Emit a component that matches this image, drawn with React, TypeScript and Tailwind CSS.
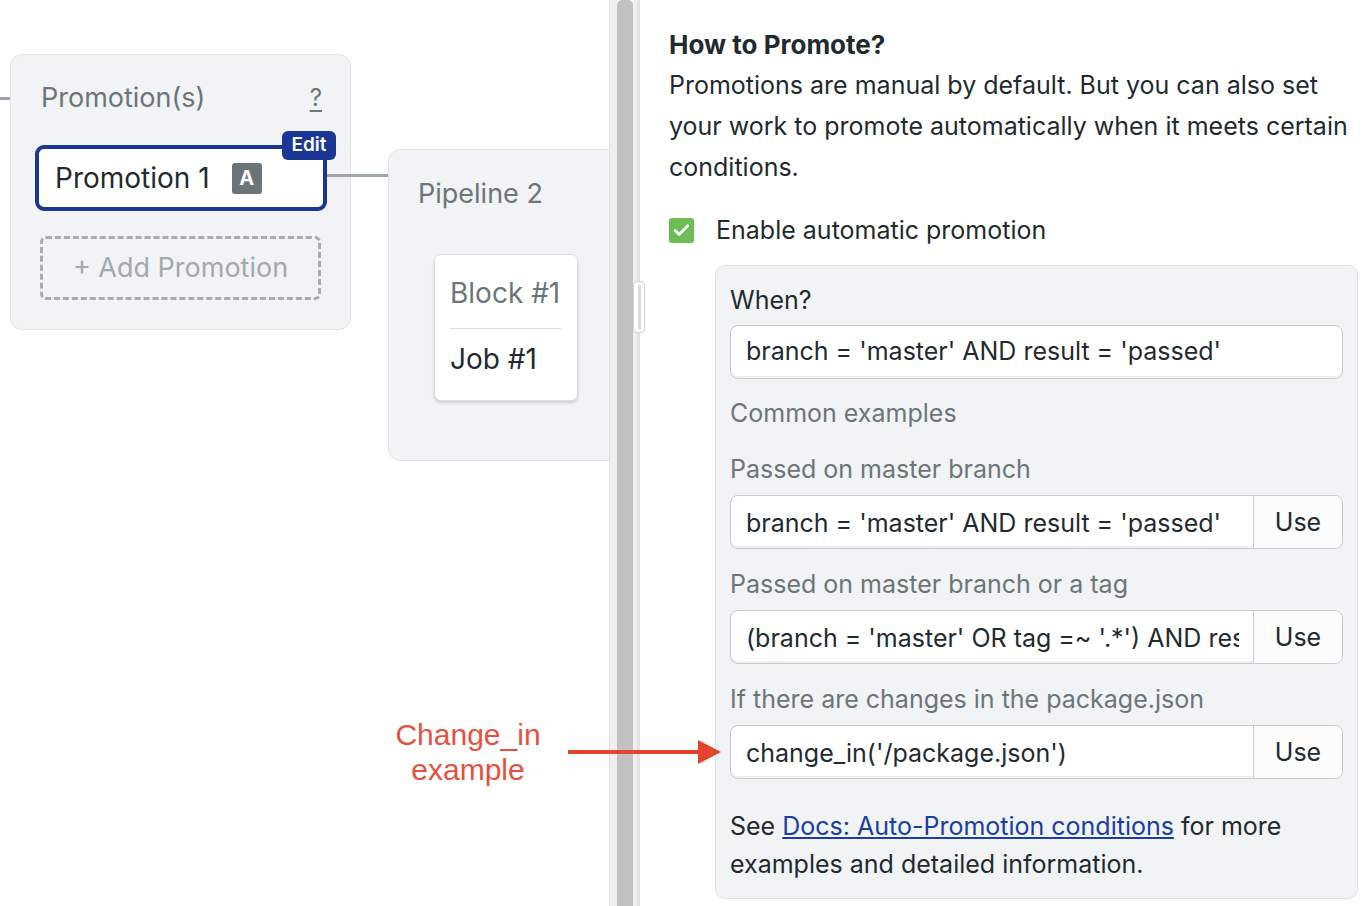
import { Check } from "lucide-react";

const UI = "font-['Inter',_'Liberation_Sans',_sans-serif]";

const examples = [
  { label: "Passed on master branch", value: "branch = 'master' AND result = 'passed'" },
  {
    label: "Passed on master branch or a tag",
    value: "(branch = 'master' OR tag =~ '.*') AND result = 'passed'",
  },
  { label: "If there are changes in the package.json", value: "change_in('/package.json')" },
];

function Diagram() {
  return (
    <div className="relative h-full w-[609px] shrink-0 overflow-hidden bg-white">
      {/* edge coming in from the left */}
      <div className="absolute left-0 top-[97px] h-[3px] w-[11px] bg-[#9ca6a9]" />

      <div className="absolute left-[10px] top-[54px] h-[276px] w-[341px] rounded-[12px] border border-[#e1e5e7] bg-[#f1f3f4]">
        <div className="flex items-center justify-between pl-[30px] pr-[28px] pt-[24px]">
          <span className="text-[27px] leading-[38px] text-[#6b7679]">Promotion(s)</span>
          <span className="text-[24px] leading-[38px] text-[#6b7679] underline underline-offset-4">?</span>
        </div>

        <div className="relative ml-[24px] mt-[28px] flex h-[66px] w-[292px] items-center rounded-[9px] border-4 border-[#1a3794] bg-white pl-[16px]">
          <span className="text-[28px] text-[#1f2b2f]">Promotion 1</span>
          <span className="ml-[22px] flex h-[31px] w-[30px] items-center justify-center rounded-[3px] bg-[#6b7476] text-[20px] font-bold text-white">
            A
          </span>
          <span className="absolute -right-[13px] -top-[18px] flex h-[29px] w-[54px] items-center justify-center rounded-[6px] bg-[#1a3794] text-[19px] font-semibold text-white">
            Edit
          </span>
        </div>

        <div className="ml-[29px] mt-[25px] flex h-[64px] w-[281px] items-center justify-center rounded-[6px] border-[3px] border-dashed border-[#a5adb0] text-[27px] text-[#a2aaad]">
          + Add Promotion
        </div>
      </div>

      <div className="absolute left-[327px] top-[174px] h-[3px] w-[62px] bg-[#9ca6a9]" />

      <div className="absolute left-[388px] top-[149px] h-[312px] w-[260px] rounded-[12px] border border-[#e1e5e7] bg-[#f1f3f4]">
        <div className="pl-[29px] pt-[25px] text-[27px] leading-[38px] text-[#6b7679]">Pipeline 2</div>
        <div className="ml-[45px] mt-[41px] w-[144px] rounded-[7px] border border-[#dadfe1] bg-white px-[15px] pb-[22px] pt-[19px] shadow-[0_2px_3px_rgba(0,0,0,0.15)]">
          <div className="text-[28px] leading-[38px] text-[#6b7679]">Block #1</div>
          <div className="mt-[16px] h-px bg-[#dadfe1]" />
          <div className="mt-[11px] text-[28px] leading-[38px] text-[#1f2b2f]">Job #1</div>
        </div>
      </div>
    </div>
  );
}

function Divider() {
  return (
    <div className="relative flex h-full w-[31px] shrink-0">
      <div className="w-px bg-[#e2e2e2]" />
      <div className="w-[7px] bg-[#efefef]" />
      <div className="w-[16px] rounded-t-[5px] bg-[#c1c1c1]" />
      <div className="w-[4px] bg-[#efefef]" />
      <div className="w-[3px] bg-[#e2e2e2]" />
      <div className="absolute left-[24px] top-[281px] flex h-[52px] w-[12px] justify-center rounded-[4px] border border-[#cfd4d6] bg-white py-[3px]">
        <div className="w-[3px] bg-[#d6dbdd]" />
      </div>
    </div>
  );
}

function InputGroup({ value }: { value: string }) {
  return (
    <div className="flex h-[54px] overflow-hidden rounded-[8px] border border-[#c5cbce] bg-white shadow-[inset_0_-2px_0_rgba(0,0,0,0.06)]">
      <div className="ml-[15px] mr-[14px] min-w-0 flex-1 overflow-hidden whitespace-nowrap pt-[1px] leading-[52px]">
        {value}
      </div>
      <div className="flex w-[89px] shrink-0 items-center justify-center border-l border-[#c5cbce] bg-[#fcfcfc] pt-[2px]">
        Use
      </div>
    </div>
  );
}

function Settings() {
  return (
    <div className="min-w-0 flex-1 pl-[29px] pr-[10px] pt-[24px] text-[25px] text-[#1f2b2f]">
      <h2 className="text-[26px] font-bold leading-[41px]">How to Promote?</h2>
      <p className="leading-[41px]">
        Promotions are manual by default. But you can also set your work to promote automatically when it
        meets certain conditions.
      </p>

      <label className="mt-[22px] flex h-[41px] items-center gap-[22px]">
        <span className="flex h-[25px] w-[25px] items-center justify-center rounded-[3px] bg-[#6cbd55]">
          <Check className="h-[19px] w-[19px] text-white" strokeWidth={3.5} />
        </span>
        Enable automatic promotion
      </label>

      <div className="ml-[46px] mt-[14px] rounded-[10px] border border-[#dde1e3] bg-[#f1f3f4] px-[14px] pb-[15px] pt-[14px]">
        <div className="leading-[41px]">When?</div>
        <div className="mt-[4px] flex h-[54px] items-center rounded-[8px] border border-[#c5cbce] bg-white px-[15px] shadow-[inset_0_-2px_0_rgba(0,0,0,0.06)]">
          branch = 'master' AND result = 'passed'
        </div>

        <div className="mt-[14px] leading-[41px] text-[#6b7679]">Common examples</div>

        {examples.map((ex) => (
          <div key={ex.label} className="mt-[15px]">
            <div className="leading-[41px] text-[#6b7679]">{ex.label}</div>
            <div className="mt-[5px]">
              <InputGroup value={ex.value} />
            </div>
          </div>
        ))}

        <p className="mt-[28px] leading-[38px]">
          See{" "}
          <a href="#" className="text-[#1a3ea5] underline underline-offset-2">
            Docs: Auto-Promotion conditions
          </a>{" "}
          for more examples and detailed information.
        </p>
      </div>
    </div>
  );
}

function Callout() {
  return (
    <div className="pointer-events-none absolute left-[380px] top-[717px] flex items-center">
      <div className="w-[176px] text-center font-['Liberation_Sans',_sans-serif] text-[30px] leading-[35px] text-[#e8503e]">
        Change_in
        <br />
        example
      </div>
      <div className="ml-[12px] h-[4px] w-[130px] bg-[#e5432b]" />
      <div className="h-0 w-0 border-y-[12px] border-l-[23px] border-y-transparent border-l-[#e5432b]" />
    </div>
  );
}

export default function App() {
  return (
    <div className={`relative flex h-[906px] w-[1368px] overflow-hidden bg-white ${UI}`}>
      <Diagram />
      <Divider />
      <Settings />
      <Callout />
    </div>
  );
}
